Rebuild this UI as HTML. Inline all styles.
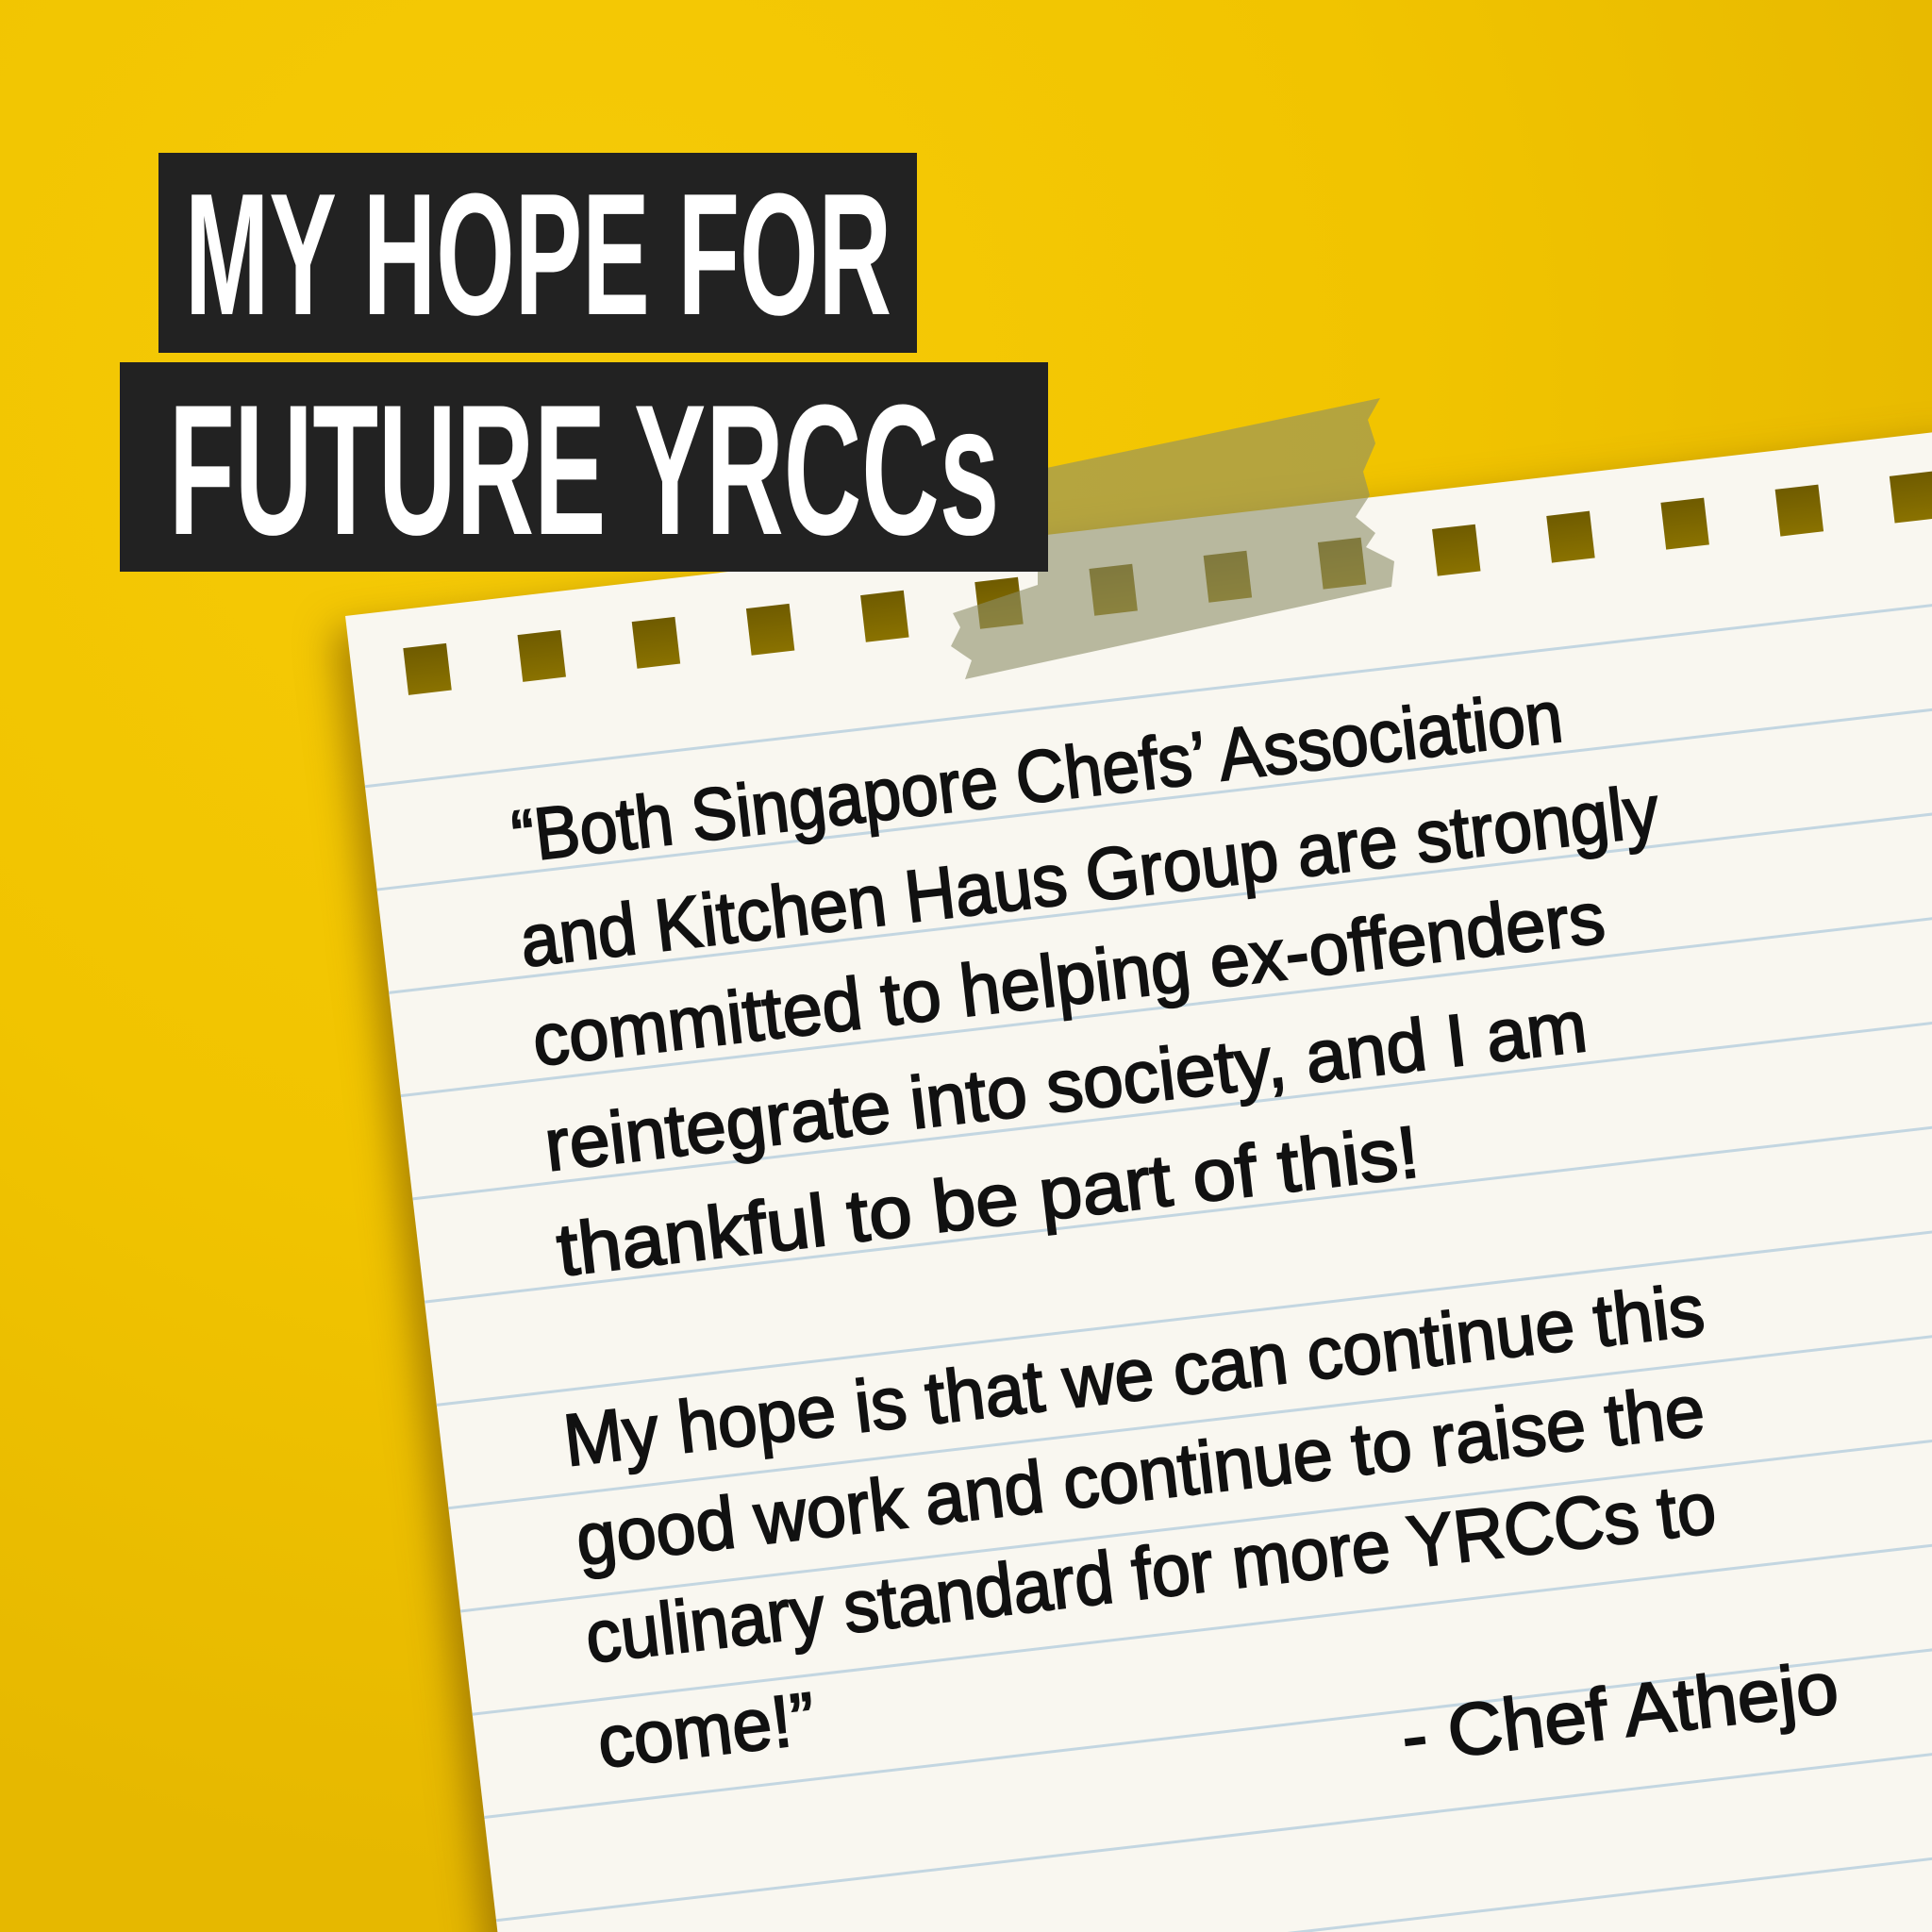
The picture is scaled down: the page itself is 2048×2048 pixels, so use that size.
<!DOCTYPE html>
<html><head><meta charset="utf-8"><style>
html,body{margin:0;padding:0;background:#f1c400}
body{width:2048px;height:2048px;overflow:hidden;position:relative}
#wrap{position:absolute;left:0;top:0;width:2048px;height:2048px;overflow:hidden;
background:radial-gradient(ellipse 1600px 1600px at 30% 20%,#f6cb08 0%,#f1c400 55%,#e6b800 100%);}
.paper{position:absolute;left:366px;top:653px;width:1730px;height:1630px;background:#f9f7f0;
transform-origin:0 0;transform:rotate(-6.6deg);box-shadow:-14px 14px 40px rgba(110,75,0,0.55);}
.paper svg{position:absolute;left:0;top:0}
.box{position:absolute;background:#222}
.tt{position:absolute;color:#fff;font-family:"Liberation Sans",sans-serif;font-weight:700;line-height:1;white-space:nowrap;transform-origin:0 0}
</style></head><body><div id="wrap">
<div class="paper">
<svg width="1730" height="1630" xmlns="http://www.w3.org/2000/svg">
<defs><linearGradient id="sq" x1="0" y1="0" x2="0" y2="1"><stop offset="0" stop-color="#6f5b00"/><stop offset="1" stop-color="#8a7200"/></linearGradient></defs>
<g stroke="#c3d6e1" stroke-width="3">
<line x1="0" y1="182" x2="1730" y2="182"/><line x1="0" y1="292" x2="1730" y2="292"/>
<line x1="0" y1="402" x2="1730" y2="402"/><line x1="0" y1="512" x2="1730" y2="512"/>
<line x1="0" y1="622" x2="1730" y2="622"/><line x1="0" y1="732" x2="1730" y2="732"/>
<line x1="0" y1="842" x2="1730" y2="842"/><line x1="0" y1="952" x2="1730" y2="952"/>
<line x1="0" y1="1062" x2="1730" y2="1062"/><line x1="0" y1="1172" x2="1730" y2="1172"/>
<line x1="0" y1="1282" x2="1730" y2="1282"/><line x1="0" y1="1392" x2="1730" y2="1392"/>
<line x1="0" y1="1502" x2="1730" y2="1502"/><line x1="0" y1="1612" x2="1730" y2="1612"/>
</g>
<g fill="url(#sq)">
<rect x="57" y="41" width="46" height="50"/><rect x="179" y="41" width="46" height="50"/>
<rect x="301" y="41" width="46" height="50"/><rect x="423" y="41" width="46" height="50"/>
<rect x="545" y="41" width="46" height="50"/><rect x="667" y="41" width="46" height="50"/>
<rect x="789" y="41" width="46" height="50"/><rect x="911" y="41" width="46" height="50"/>
<rect x="1033" y="41" width="46" height="50"/><rect x="1155" y="41" width="46" height="50"/>
<rect x="1277" y="41" width="46" height="50"/><rect x="1399" y="41" width="46" height="50"/>
<rect x="1521" y="41" width="46" height="50"/><rect x="1643" y="41" width="46" height="50"/>
</g>
<g font-family="Liberation Sans, sans-serif" font-size="78" fill="#111" stroke="#111" stroke-width="2">
<text x="149" y="280" textLength="1120" lengthAdjust="spacingAndGlyphs">“Both Singapore Chefs’ Association</text>
<text x="145" y="391" textLength="1214" lengthAdjust="spacingAndGlyphs">and Kitchen Haus Group are strongly</text>
<text x="146" y="497" textLength="1143" lengthAdjust="spacingAndGlyphs">committed to helping ex-offenders</text>
<text x="146" y="609" textLength="1111" lengthAdjust="spacingAndGlyphs">reintegrate into society, and I am</text>
<text x="146" y="721" textLength="919" lengthAdjust="spacingAndGlyphs">thankful to be part of this!</text>
<text x="130" y="922" textLength="1216" lengthAdjust="spacingAndGlyphs">My hope is that we can continue this</text>
<text x="131" y="1028" textLength="1203" lengthAdjust="spacingAndGlyphs">good work and continue to raise the</text>
<text x="129" y="1132" textLength="1205" lengthAdjust="spacingAndGlyphs">culinary standard for more YRCCs to</text>
<text x="129" y="1244" textLength="231" lengthAdjust="spacingAndGlyphs">come!”</text>
<text x="976" y="1336" textLength="465" lengthAdjust="spacingAndGlyphs">-  Chef Athejo</text>
</g>
</svg>
</div>
<svg style="position:absolute;left:0;top:0" width="2048" height="2048" xmlns="http://www.w3.org/2000/svg">
<polygon fill="rgba(140,142,103,0.6)" points="1100,498 1463,422 1450,445 1458,470 1445,500 1452,525 1437,548 1458,565 1448,580 1478,595 1475,622 1023,720 1030,700 1008,685 1018,665 1010,650 1100,620"/>
</svg>
<div class="box" style="left:168px;top:162px;width:804px;height:212px"></div>
<div class="box" style="left:127px;top:384px;width:984px;height:222px"></div>
<div class="tt" style="left:196px;top:177px;font-size:184px;transform:scaleX(0.583)">MY HOPE FOR</div>
<div class="tt" style="left:179px;top:400px;font-size:197px;transform:scaleX(0.58)">FUTURE YRCCs</div>
</div></body></html>
